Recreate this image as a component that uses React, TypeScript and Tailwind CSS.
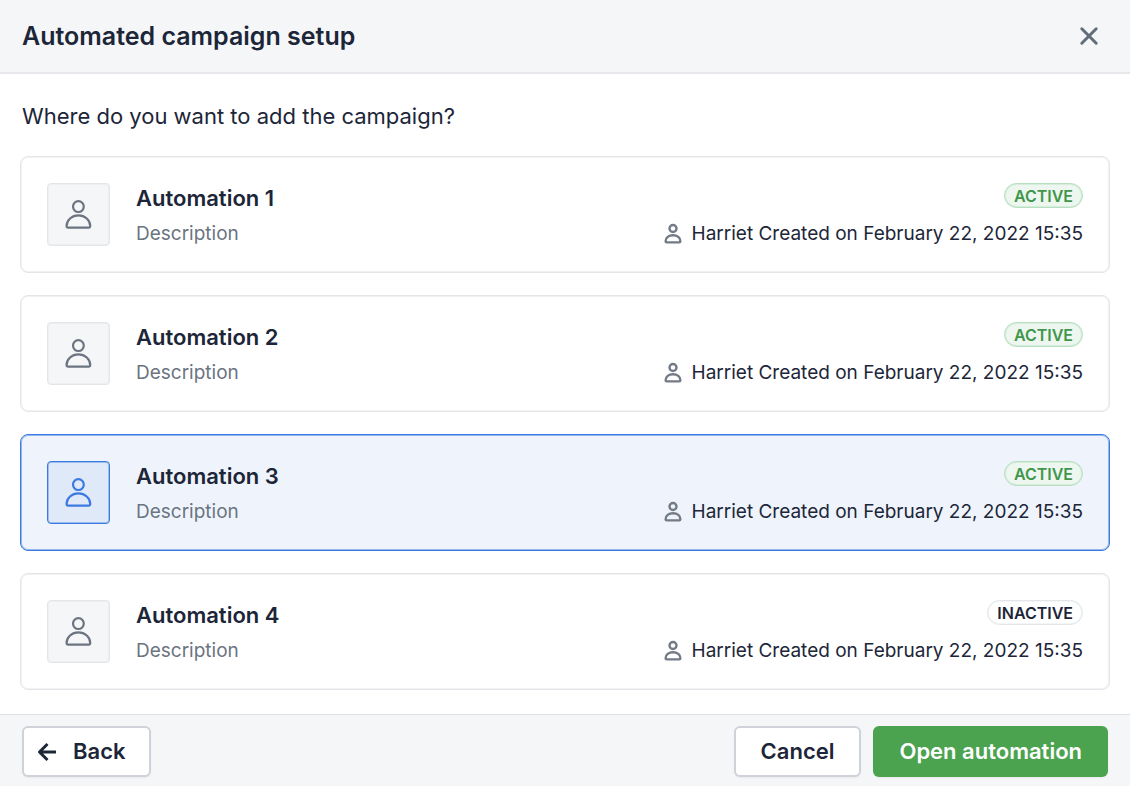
import { useState } from "react";

type Automation = {
  id: number;
  name: string;
  description: string;
  active: boolean;
  created: string;
};

const created = "Harriet Created on February 22, 2022 15:35";

const automations: Automation[] = [
  { id: 1, name: "Automation 1", description: "Description", active: true, created },
  { id: 2, name: "Automation 2", description: "Description", active: true, created },
  { id: 3, name: "Automation 3", description: "Description", active: true, created },
  { id: 4, name: "Automation 4", description: "Description", active: false, created },
];

function PersonIcon() {
  return (
    <svg width="29" height="31" viewBox="0 0 29 31" fill="none" stroke="currentColor" strokeWidth="2.2" aria-hidden="true">
      <circle cx="14.4" cy="7.6" r="5.4" />
      <path d="M14.4 16.4C7.8 16.4 2.6 21.2 2.6 27C2.6 28.1 3.2 28.6 4.2 28.6H24.6C25.6 28.6 26.2 28.1 26.2 27C26.2 21.2 21 16.4 14.4 16.4Z" strokeLinejoin="round" />
    </svg>
  );
}

function SmallPersonIcon() {
  return (
    <svg width="18" height="22" viewBox="0 0 18 22" fill="none" stroke="currentColor" strokeWidth="2.4" aria-hidden="true">
      <circle cx="9" cy="5.5" r="3.5" />
      <path d="M9 12.2C4.7 12.2 1.6 14.8 1.6 18.2C1.6 19 2 19.4 2.8 19.4H15.2C16 19.4 16.4 19 16.4 18.2C16.4 14.8 13.3 12.2 9 12.2Z" strokeLinejoin="round" />
    </svg>
  );
}

function StatusBadge({ active }: { active: boolean }) {
  return (
    <span
      className={`flex h-[25px] items-center rounded-full border px-[9px] text-base font-semibold ring-1 ring-inset ${
        active
          ? "border-[#b5dfbf] bg-[#edf7f0] text-[#41964b] ring-[#b5dfbf]/40"
          : "border-[#e3e5e9] bg-white text-[#1c2638] ring-[#e3e5e9]/40"
      }`}
    >
      {active ? "ACTIVE" : "INACTIVE"}
    </span>
  );
}

function AutomationCard({
  automation,
  selected,
  onSelect,
}: {
  automation: Automation;
  selected: boolean;
  onSelect: () => void;
}) {
  return (
    <label
      className={`relative flex cursor-pointer items-start gap-[26px] rounded-lg border p-[26px] ring-1 ring-inset has-focus-visible:outline-2 has-focus-visible:outline-offset-2 has-focus-visible:outline-[#3b7ae0] ${
        selected ? "border-[#3b7ae0] bg-[#eff4fc] ring-[#3b7ae0]/50" : "border-[#e3e5e9] bg-white ring-[#e3e5e9]/50"
      }`}
    >
      <input type="radio" name="automation" className="sr-only" checked={selected} onChange={onSelect} />
      <span
        className={`flex size-[63px] shrink-0 items-center justify-center rounded border ring-1 ring-inset ${
          selected
            ? "border-[#3b7ae0] bg-[#e0e9f8] text-[#3b7ae0] ring-[#3b7ae0]/40"
            : "border-[#e3e5e9] bg-[#f5f6f8] text-[#6b7480] ring-[#e3e5e9]/40"
        }`}
      >
        <PersonIcon />
      </span>
      <span className="flex min-w-0 flex-1 flex-col gap-2">
        <span className="text-[22px] leading-[30px] font-semibold text-[#1c2638]">{automation.name}</span>
        <span className="text-[19px] leading-[25px] text-[#6b7480]">{automation.description}</span>
      </span>
      <span className="flex flex-col items-end gap-[13px]">
        <StatusBadge active={automation.active} />
        <span className="flex items-center gap-2.5 text-[19px] leading-[25px] text-[#1c2638]">
          <span className="text-[#727b86]">
            <SmallPersonIcon />
          </span>
          {automation.created}
        </span>
      </span>
    </label>
  );
}

export default function App() {
  const [selected, setSelected] = useState(3);

  return (
    <div className="flex min-h-screen flex-col bg-white font-[Inter,sans-serif] text-[#1c2638]">
      <header className="flex items-center justify-between border-b-2 border-[#e6e8eb] bg-[#f5f6f8] py-4 pr-[29px] pl-[22px]">
        <h1 className="text-[25px] leading-10 font-semibold">Automated campaign setup</h1>
        <button type="button" aria-label="Close" className="flex size-6 items-center justify-center text-[#636d79]">
          <svg width="24" height="24" viewBox="0 0 24 24" fill="none" stroke="currentColor" strokeWidth="3" strokeLinecap="round" aria-hidden="true">
            <path d="M4.8 4.8L19.2 19.2M19.2 4.8L4.8 19.2" />
          </svg>
        </button>
      </header>

      <main className="flex-1 px-5 pb-6">
        <fieldset>
          <legend className="px-0.5 pt-7 pb-[26px] text-[22px] leading-7">Where do you want to add the campaign?</legend>
          <div className="flex flex-col gap-[22px]">
            {automations.map((automation) => (
              <AutomationCard
                key={automation.id}
                automation={automation}
                selected={automation.id === selected}
                onSelect={() => setSelected(automation.id)}
              />
            ))}
          </div>
        </fieldset>
      </main>

      <footer className="flex items-center justify-between border-t border-[#dfe1e4] bg-[#f5f6f8] px-[22px] pt-[11px] pb-[9px] text-[22px] font-semibold">
        <button
          type="button"
          className="flex h-[51px] items-center gap-4 rounded-md border-2 border-[#cfd2d8] bg-white pr-6 pl-[13px] shadow-xs"
        >
          <svg width="20" height="20" viewBox="0 0 20 20" fill="none" stroke="currentColor" strokeWidth="3" aria-hidden="true">
            <path d="M19 10H3M10.5 2L2.5 10L10.5 18" strokeLinejoin="round" />
          </svg>
          Back
        </button>
        <div className="flex gap-3">
          <button type="button" className="h-[51px] rounded-md border-2 border-[#cfd2d8] bg-white px-[25px] shadow-xs">
            Cancel
          </button>
          <button type="button" className="h-[51px] rounded-md bg-[#4ba350] px-[26px] text-white shadow-xs">
            Open automation
          </button>
        </div>
      </footer>
    </div>
  );
}
